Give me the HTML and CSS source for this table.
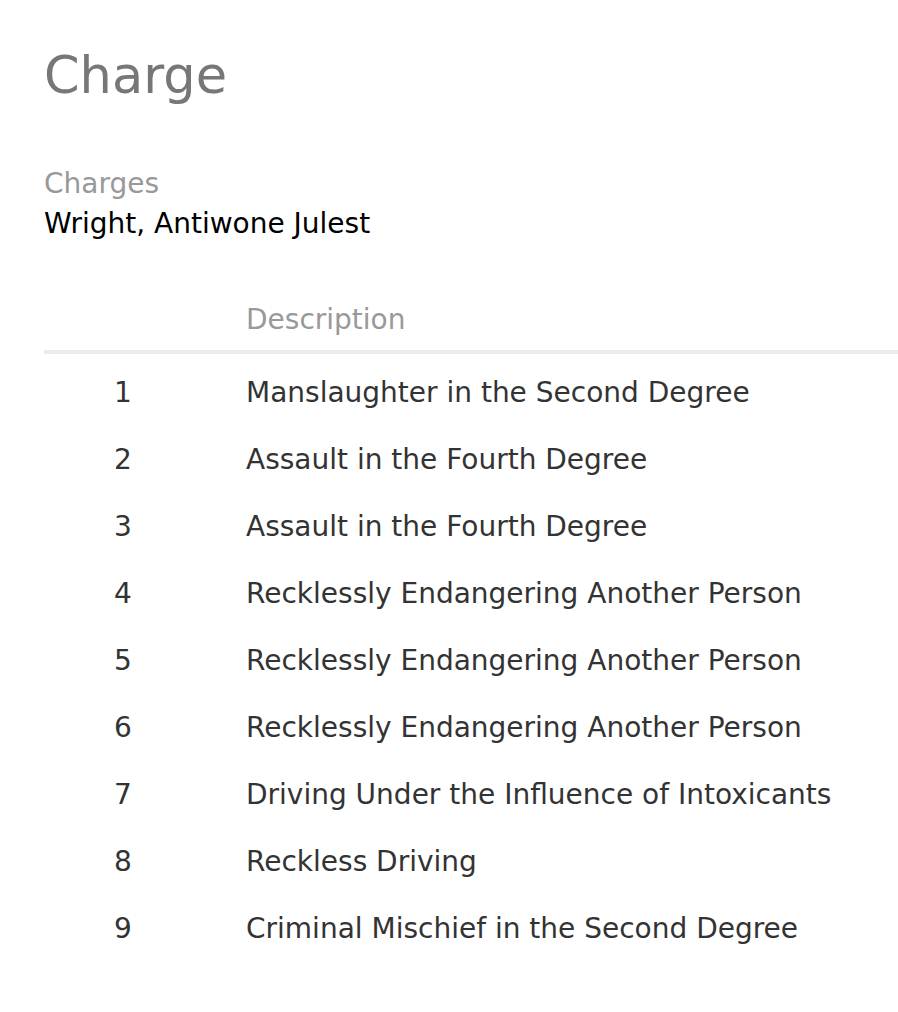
FILE: index.html
```html
<!DOCTYPE html>
<html>
<head>
<meta charset="utf-8">
<link rel="stylesheet" href="styles.css">
</head>
<body>
<div class="page">
  <h1 class="title">Charge</h1>
  <div class="field">
    <div class="label">Charges</div>
    <div class="value">Wright, Antiwone Julest</div>
  </div>
  <div class="table">
    <div class="row head">
      <div class="num"></div>
      <div class="desc">Description</div>
    </div>
    <div class="body">
      <div class="row"><div class="num">1</div><div class="desc">Manslaughter in the Second Degree</div></div>
      <div class="row"><div class="num">2</div><div class="desc">Assault in the Fourth Degree</div></div>
      <div class="row"><div class="num">3</div><div class="desc">Assault in the Fourth Degree</div></div>
      <div class="row"><div class="num">4</div><div class="desc">Recklessly Endangering Another Person</div></div>
      <div class="row"><div class="num">5</div><div class="desc">Recklessly Endangering Another Person</div></div>
      <div class="row"><div class="num">6</div><div class="desc">Recklessly Endangering Another Person</div></div>
      <div class="row"><div class="num">7</div><div class="desc">Driving Under the Influence of Intoxicants</div></div>
      <div class="row"><div class="num">8</div><div class="desc">Reckless Driving</div></div>
      <div class="row"><div class="num">9</div><div class="desc">Criminal Mischief in the Second Degree</div></div>
    </div>
  </div>
</div>
</body>
</html>
```
FILE: styles.css
```css
html, body {
  margin: 0;
  padding: 0;
  background: #fff;
}
body {
  font-family: "DejaVu Sans", Verdana, sans-serif;
  color: #333;
}
.page {
  padding: 40px 0 0 44px;
}
.title {
  margin: 0;
  font-weight: normal;
  font-size: 51px;
  line-height: 72px;
  color: #777;
}
.field {
  margin-top: 52px;
}
.label {
  font-size: 28px;
  line-height: 40px;
  color: #999;
}
.value {
  font-size: 28px;
  line-height: 40px;
  color: #000;
}
.table {
  margin-top: 56px;
}
.body {
  padding-top: 5px;
}
.row {
  display: grid;
  grid-template-columns: 158px 1fr;
  font-size: 28px;
  line-height: 67px;
}
.row.head {
  color: #999;
  line-height: 40px;
  border-bottom: 4px solid #ebebeb;
  padding-bottom: 10px;
}
.num {
  text-align: center;
}
.desc {
  padding-left: 44px;
  white-space: nowrap;
}
```
